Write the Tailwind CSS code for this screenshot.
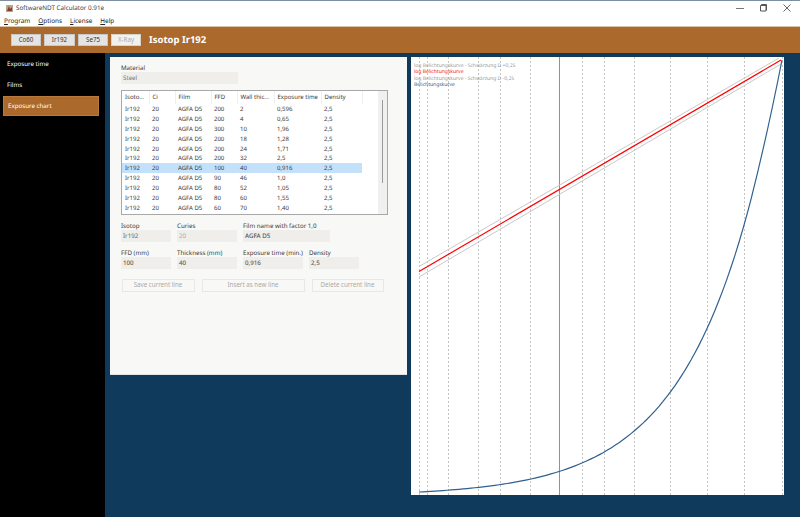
<!DOCTYPE html>
<html lang="en">
<head>
<meta charset="UTF-8">
<title>SoftwareNDT Calculator 0.91e</title>
<script src="https://cdn.jsdelivr.net/npm/@tailwindcss/browser@4"></script>
</head>
<body class="w-[800px] h-[517px] overflow-hidden bg-[#0f3a5c] font-['Noto_Sans',sans-serif] text-[6.2px] text-[#3a3a3a] [text-rendering:geometricPrecision]">

  <!-- title bar -->
  <div class="h-[15px] bg-white border-t border-[#7d8fa0] flex items-center pl-[6px]">
    <svg class="w-[7px] h-[7px] mr-[3px]" viewBox="0 0 7 7">
      <rect width="7" height="7" fill="#b9a48f"/>
      <path d="M1 6 L3 1 L4 4 L6 2 L6 6 Z" fill="#8a3f22"/>
    </svg>
    <span class="text-[6.3px] text-[#444]">SoftwareNDT Calculator 0.91e</span>
    <div class="ml-auto flex items-center h-full">
      <svg class="w-[10px] h-[10px] mr-[13px]" viewBox="0 0 10 10"><path d="M1 5.5H9" stroke="#777" stroke-width="1"/></svg>
      <svg class="w-[10px] h-[10px] mr-[14px]" viewBox="0 0 10 10"><path d="M2.5 2.5H8V8H2.5Z M3.5 2.5V1.5H8.5V7H8" fill="none" stroke="#555" stroke-width="1"/></svg>
      <svg class="w-[10px] h-[10px] mr-[8px]" viewBox="0 0 10 10"><path d="M1.5 1.5L8.5 8.5M8.5 1.5L1.5 8.5" stroke="#555" stroke-width="0.9"/></svg>
    </div>
  </div>

  <!-- menu -->
  <div class="h-[11px] bg-white flex items-center pl-[4px] gap-[8px] text-[6.4px] text-[#222]">
    <span><u>P</u>rogram</span>
    <span><u>O</u>ptions</span>
    <span><u>L</u>icense</span>
    <span><u>H</u>elp</span>
  </div>

  <!-- header -->
  <div class="h-[27px] bg-[#ab6a2b] border-t border-[#d9c2a6] flex items-center pl-[11px]">
    <div class="flex gap-[3px]">
      <button class="w-[30px] h-[12px] bg-[#e4e4e4] border border-[#c8c8c8] text-[#333] text-[6.2px] leading-none">Co60</button>
      <button class="w-[31px] h-[12px] bg-[#e4e4e4] border border-[#c8c8c8] text-[#333] text-[6.2px] leading-none">Ir192</button>
      <button class="w-[30px] h-[12px] bg-[#e4e4e4] border border-[#c8c8c8] text-[#333] text-[6.2px] leading-none">Se75</button>
      <button class="w-[30px] h-[12px] bg-[#f3f1ee] border border-[#d8d2cb] text-[#aaa] text-[6.2px] leading-none">X-Ray</button>
    </div>
    <span class="ml-[8px] text-white font-bold text-[9.5px]">Isotop Ir192</span>
  </div>

  <div class="flex h-[464px]">
    <!-- sidebar -->
    <nav class="w-[105px] bg-black text-white pt-[1px]">
      <div class="h-[20px] pl-[7px] flex items-center">Exposure time</div>
      <div class="h-[22px] pl-[7px] flex items-center">Films</div>
      <div class="h-[20px] ml-[3px] w-[96px] pl-[4px] flex items-center bg-[#ab6a2b] border border-[#b8793d]">Exposure chart</div>
    </nav>

    <!-- form panel -->
    <section class="w-[297px] h-[318px] ml-[5px] mt-[4px] bg-[#f8f8f6] border-b border-[#dfe3e6] pl-[11px] pt-[6px]">
      <div class="h-[9px] flex items-center">Material</div>
      <div class="w-[117px] h-[12px] bg-[#efeeeb] pl-[2px] flex items-center text-[#777]">Steel</div>

      <div class="relative w-[267px] h-[125px] mt-[6px] bg-white border border-[#a8a8a8] overflow-hidden">
        <table class="table-fixed w-[240px] text-[6px] border-collapse whitespace-nowrap [&_td]:pl-[3px] [&_td]:h-[9.9px] [&_td]:leading-none [&_td]:p-0 [&_th]:pl-[3px] [&_th]:font-normal [&_th]:text-left [&_th]:h-[13px] [&_th]:border-r [&_th]:border-[#eeeeee]">
          <colgroup>
            <col class="w-[27px]"><col class="w-[26px]"><col class="w-[36px]"><col class="w-[26px]"><col class="w-[37px]"><col class="w-[47px]"><col class="w-[41px]">
          </colgroup>
          <thead>
            <tr><th>Isoto...</th><th>Ci</th><th>Film</th><th>FFD</th><th>Wall thic...</th><th>Exposure time</th><th>Density</th></tr>
          </thead>
          <tbody>
            <tr><td>Ir192</td><td>20</td><td>AGFA D5</td><td>200</td><td>2</td><td>0,596</td><td>2,5</td></tr>
            <tr><td>Ir192</td><td>20</td><td>AGFA D5</td><td>200</td><td>4</td><td>0,65</td><td>2,5</td></tr>
            <tr><td>Ir192</td><td>20</td><td>AGFA D5</td><td>300</td><td>10</td><td>1,96</td><td>2,5</td></tr>
            <tr><td>Ir192</td><td>20</td><td>AGFA D5</td><td>200</td><td>18</td><td>1,28</td><td>2,5</td></tr>
            <tr><td>Ir192</td><td>20</td><td>AGFA D5</td><td>200</td><td>24</td><td>1,71</td><td>2,5</td></tr>
            <tr><td>Ir192</td><td>20</td><td>AGFA D5</td><td>200</td><td>32</td><td>2,5</td><td>2,5</td></tr>
            <tr class="bg-[#c4e1fb]"><td>Ir192</td><td>20</td><td>AGFA D5</td><td>100</td><td>40</td><td>0,916</td><td>2,5</td></tr>
            <tr><td>Ir192</td><td>20</td><td>AGFA D5</td><td>90</td><td>46</td><td>1,0</td><td>2,5</td></tr>
            <tr><td>Ir192</td><td>20</td><td>AGFA D5</td><td>80</td><td>52</td><td>1,05</td><td>2,5</td></tr>
            <tr><td>Ir192</td><td>20</td><td>AGFA D5</td><td>80</td><td>60</td><td>1,55</td><td>2,5</td></tr>
            <tr><td>Ir192</td><td>20</td><td>AGFA D5</td><td>60</td><td>70</td><td>1,40</td><td>2,5</td></tr>
          </tbody>
        </table>
        <!-- scrollbar -->
        <div class="absolute right-0 top-0 bottom-0 w-[9px] bg-[#f0f0f0] flex justify-center pt-[9px]">
          <div class="w-[1.5px] h-[83px] bg-[#9c9a9a]"></div>
        </div>
      </div>

      <div class="flex gap-[6px] mt-[6px]">
        <div class="w-[50px]"><div class="h-[9px] flex items-center">Isotop</div><div class="h-[12px] bg-[#efeeeb] pl-[2px] flex items-center text-[#666]">Ir192</div></div>
        <div class="w-[60px]"><div class="h-[9px] flex items-center">Curies</div><div class="h-[12px] bg-[#efeeeb] pl-[2px] flex items-center text-[#aaa]">20</div></div>
        <div class="w-[87px]"><div class="h-[9px] flex items-center">Film name with factor 1,0</div><div class="h-[12px] bg-[#efeeeb] pl-[2px] flex items-center text-[#555] font-medium">AGFA D5</div></div>
      </div>

      <div class="flex gap-[6px] mt-[6px]">
        <div class="w-[50px]"><div class="h-[9px] flex items-center">FFD (mm)</div><div class="h-[12px] bg-[#efeeeb] pl-[2px] flex items-center text-[#6a5a50] font-medium">100</div></div>
        <div class="w-[60px]"><div class="h-[9px] flex items-center">Thickness (mm)</div><div class="h-[12px] bg-[#efeeeb] pl-[2px] flex items-center text-[#6a5a50] font-medium">40</div></div>
        <div class="w-[60px]"><div class="h-[9px] flex items-center whitespace-nowrap">Exposure time (min.)</div><div class="h-[12px] bg-[#efeeeb] pl-[2px] flex items-center text-[#6a5a50] font-medium">0,916</div></div>
        <div class="w-[50px]"><div class="h-[9px] flex items-center">Density</div><div class="h-[12px] bg-[#efeeeb] pl-[2px] flex items-center text-[#6a5a50] font-medium">2,5</div></div>
      </div>

      <div class="flex gap-[7px] mt-[10px] ml-[0.5px] text-[#aaa]">
        <button class="w-[73px] h-[13px] border border-[#e8e8e5] leading-none">Save current line</button>
        <button class="w-[103px] h-[13px] border border-[#e8e8e5] leading-none">Insert as new line</button>
        <button class="w-[72px] h-[13px] border border-[#e8e8e5] leading-none">Delete current line</button>
      </div>
    </section>

    <!-- chart -->
    <section class="relative w-[373px] h-[438px] ml-[4px] mt-[4px] bg-white">
      <svg class="w-[373px] h-[438px]" viewBox="411 57 373 438">
        <g stroke="#c4c4c4" stroke-width="1" stroke-dasharray="2 2">
          <path d="M419.5 57V495"/><path d="M427.5 57V495"/><path d="M448.5 57V495"/><path d="M478.5 57V495"/>
          <path d="M500.5 57V495"/><path d="M530.5 57V495"/><path d="M582.5 57V495"/><path d="M604.5 57V495"/>
          <path d="M634.5 57V495"/><path d="M670.5 57V495"/><path d="M707.5 57V495"/><path d="M744.5 57V495"/><path d="M782.5 57V495"/>
        </g>
        <path d="M559.5 57V495" stroke="#c27e7e" stroke-width="1"/>
        <path d="M419 266.5L779 58" stroke="#c9c9c9" stroke-width="1" fill="none"/>
        <path d="M419 277L781 64" stroke="#c9c9c9" stroke-width="1" fill="none"/>
        <path d="M419 271.5L781 60" stroke="#ff0000" stroke-width="1.2" fill="none"/>
        <path id="curve" stroke="#2f6090" stroke-width="1.2" fill="none"/>
      </svg>
      <div class="absolute left-[3px] top-[6px] text-[5px] leading-[6.3px] whitespace-nowrap">
        <div class="text-[#9a9a9a]">log Belichtungskurve - Schwärzung D +0,25</div>
        <div class="text-[#f01818]">log Belichtungskurve</div>
        <div class="text-[#9a9a9a]">log Belichtungskurve - Schwärzung D -0,25</div>
        <div class="text-[#2f6090]">Belichtungskurve</div>
      </div>
    </section>
  </div>

  <script>
    // exposure curve: exponential fit, straightening out towards the top right
    const curveY = (x) => 492 - 3.96 * (Math.exp(0.013 * (x - 419)) - 1);
    let d = `M419 ${curveY(419)}`;
    for (let x = 423; x <= 753; x += 4) {
      d += `L${x} ${curveY(x)}`;
    }
    d += 'Q767.5 134 782 60';
    document.getElementById('curve').setAttribute('d', d);
  </script>
</body>
</html>
